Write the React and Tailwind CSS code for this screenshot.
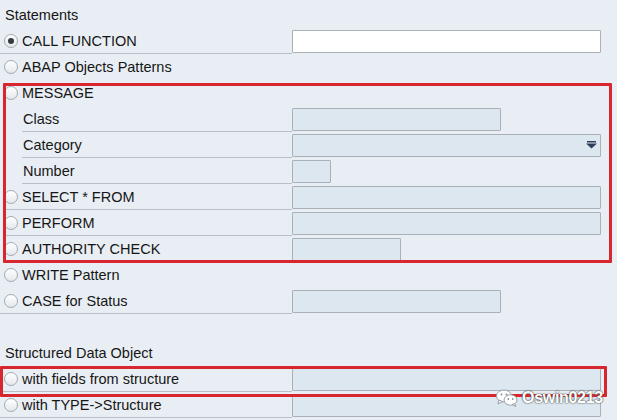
import React from 'react';

const rows = [
  { type: 'title', label: 'Statements' },
  { radio: 'on', label: 'CALL FUNCTION', input: 'w-[309px]', white: true, line: 'ml-0' },
  { radio: 'off', label: 'ABAP Objects Patterns' },
  { radio: 'off', label: 'MESSAGE' },
  { label: 'Class', input: 'w-[209px]', line: 'ml-[22px]' },
  { label: 'Category', input: 'w-[309px]', dropdown: true, line: 'ml-[22px]' },
  { label: 'Number', input: 'w-[39px]', line: 'ml-[22px]' },
  { radio: 'off', label: 'SELECT * FROM', input: 'w-[309px]', line: 'ml-[4px]' },
  { radio: 'off', label: 'PERFORM', input: 'w-[309px]', line: 'ml-[4px]' },
  { radio: 'off', label: 'AUTHORITY CHECK', input: 'w-[109px]', line: 'ml-[4px]' },
  { radio: 'off', label: 'WRITE Pattern' },
  { radio: 'off', label: 'CASE for Status', input: 'w-[209px]', line: 'ml-0' },
  { type: 'blank' },
  { type: 'title', label: 'Structured Data Object' },
  { radio: 'off', label: 'with fields from structure', input: 'w-[309px]', line: 'ml-0' },
  { radio: 'off', label: 'with TYPE->Structure', input: 'w-[309px]', line: 'ml-0' },
];

const Radio = ({ on }) => (
  <span className="w-[14px] h-[14px] shrink-0 rounded-full border border-[#a3aab2] bg-gradient-to-b from-[#ffffff] to-[#e4e7ea] flex items-center justify-center">
    {on && <span className="w-[6px] h-[6px] rounded-full bg-[#2f3a46]" />}
  </span>
);

const Row = ({ row }) => {
  if (row.type === 'blank') return <div className="h-[26px]" />;
  if (row.type === 'title') {
    return <div className="h-[26px] flex items-center pl-[5px] pt-[2px]">{row.label}</div>;
  }
  return (
    <div className="h-[26px] flex items-center">
      <div className="relative w-[292px] h-full shrink-0 flex items-center pl-[4px] gap-[4px]">
        {row.input && <div className={`absolute right-0 bottom-0 left-0 ${row.line} h-px bg-[#b7bfc7]`} />}
        {row.radio ? (
          <>
            <Radio on={row.radio === 'on'} />
            <span className="pt-[2px] whitespace-nowrap">{row.label}</span>
          </>
        ) : (
          <span className="pl-[19px] pt-[2px] whitespace-nowrap">{row.label}</span>
        )}
      </div>
      {row.input && (
        <div className={`${row.input} h-[23px] shrink-0 rounded-[1px] border border-[#a8b0b8] ${row.white ? 'bg-white' : 'bg-[#dde7f0]'} flex items-center justify-end pr-[3px]`}>
          {row.dropdown && (
            <svg width="11" height="8" viewBox="0 0 11 8">
              <rect x="1" y="0" width="9" height="1.5" fill="#2e3f5c" />
              <path d="M0 2.5 H11 L5.5 7.5 Z" fill="#2e3f5c" />
            </svg>
          )}
        </div>
      )}
    </div>
  );
};

const App = () => {
  return (
    <div className="relative w-[617px] h-[420px] overflow-hidden bg-[#e9eef4] pt-[2px] text-[14.5px] text-[#161616] font-['Liberation_Sans',Arial,sans-serif]">
      {rows.map((row, i) => (
        <Row key={i} row={row} />
      ))}

      {/* highlight boxes */}
      <div className="absolute left-[3px] top-[83px] w-[609px] h-[180px] border-[3px] border-[#d8262e] rounded-[1px] pointer-events-none" />
      <div className="absolute left-0 top-[366px] w-[607px] h-[31px] border-[3px] border-[#d8262e] rounded-[1px] pointer-events-none" />

      {/* watermark */}
      <div className="absolute left-[496px] top-[386px] flex items-center gap-[4px] pointer-events-none">
        <svg width="22" height="18" viewBox="0 0 22 18">
          <ellipse cx="8" cy="7" rx="7.5" ry="6" fill="#ffffff" stroke="#9aa0a6" strokeWidth="1" />
          <path d="M3 11 L2 15 L6.5 12.5 Z" fill="#ffffff" stroke="#9aa0a6" strokeWidth="1" />
          <ellipse cx="14.5" cy="11" rx="6.5" ry="5.2" fill="#ffffff" stroke="#9aa0a6" strokeWidth="1" />
          <path d="M18.5 14.5 L20 17.5 L16 15.5 Z" fill="#ffffff" stroke="#9aa0a6" strokeWidth="1" />
          <circle cx="5.5" cy="5.5" r="1" fill="#8a9096" />
          <circle cx="10.5" cy="5.5" r="1" fill="#8a9096" />
          <circle cx="12.3" cy="10" r="0.9" fill="#8a9096" />
          <circle cx="16.7" cy="10" r="0.9" fill="#8a9096" />
        </svg>
        <span className="text-[16px] font-bold text-white tracking-[-0.3px] [text-shadow:0_0_1px_#333,0_0_2px_#555]">Oswin0213</span>
      </div>
    </div>
  );
};

export default App;
